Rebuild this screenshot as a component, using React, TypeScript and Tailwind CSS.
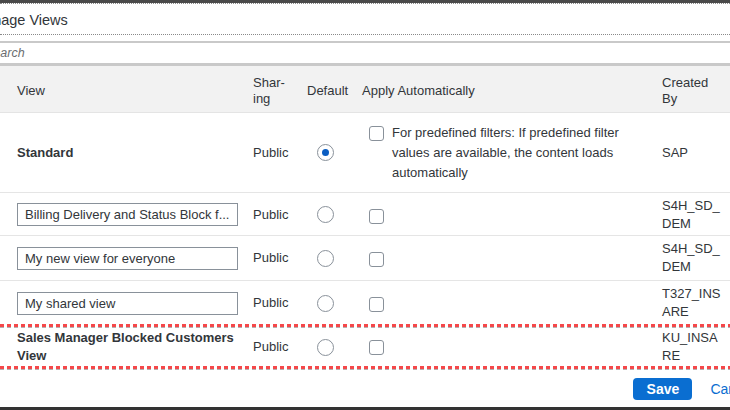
import React from 'react';

type ViewRow = {
  name: string;
  editable: boolean;
  isDefault: boolean;
  createdBy: string;
  height: string;
  note?: string;
};

const rows: ViewRow[] = [
  {
    name: 'Standard',
    editable: false,
    isDefault: true,
    createdBy: 'SAP',
    height: 'h-[80px] border-b border-[#e5e5e5]',
    note: 'For predefined filters: If predefined filter values are available, the content loads automatically',
  },
  { name: 'Billing Delivery and Status Block f...', editable: true, isDefault: false, createdBy: 'S4H_SD_DEM', height: 'h-[43px] border-b border-[#e5e5e5] pt-[1px]' },
  { name: 'My new view for everyone', editable: true, isDefault: false, createdBy: 'S4H_SD_DEM', height: 'h-[45px] border-b border-[#e5e5e5]' },
  { name: 'My shared view', editable: true, isDefault: false, createdBy: 'T327_INSARE', height: 'h-[43px] pt-[1px]' },
];

const cols = 'grid grid-cols-[253px_54px_55px_300px_62px]';

function Radio({ checked }: { checked: boolean }) {
  return (
    <div className="ml-[10px] flex h-[17px] w-[17px] items-center justify-center rounded-full border border-[#89919a] bg-white">
      {checked && <div className="h-[7px] w-[7px] rounded-full bg-[#0a5dc2]" />}
    </div>
  );
}

function Checkbox() {
  return <div className="h-[15px] w-[15px] shrink-0 rounded-[3px] border border-[#89919a] bg-white" />;
}

function RedMark() {
  return (
    <div className="h-[3px] w-full shrink-0 bg-[repeating-linear-gradient(90deg,#f5484a_0_4px,transparent_4px_7px)] drop-shadow-[0_1px_0_rgba(0,0,0,0.3)]" />
  );
}

function Row({ row }: { row: ViewRow }) {
  return (
    <div className={`${cols} ${row.height} shrink-0 items-center`}>
      <div className="pl-[17px]">
        {row.editable ? (
          <input
            readOnly
            defaultValue={row.name}
            className="block h-[23px] w-[221px] border border-[#89919a] bg-white px-[7px] text-[13px] text-[#32363a] outline-none"
          />
        ) : (
          <span className="font-bold">{row.name}</span>
        )}
      </div>
      <div>Public</div>
      <div>
        <Radio checked={row.isDefault} />
      </div>
      <div className="flex items-start gap-[8px] pl-[7px]">
        <div className="pt-[3px]">
          <Checkbox />
        </div>
        {row.note && <p className="w-[250px] leading-[20px]">{row.note}</p>}
      </div>
      <div className="break-all leading-[18px]">{row.createdBy}</div>
    </div>
  );
}

export default function App() {
  return (
    <div className="flex h-[410px] w-[730px] flex-col overflow-hidden bg-white font-['Liberation_Sans',Arial,sans-serif] text-[13px] text-[#32363a]">
      <div className="h-[3px] shrink-0 bg-[#4a4a4a]" />
      <div className="flex h-[32px] shrink-0 items-center border-y border-dotted border-[#8a8a8a] pt-[3px]">
        <span className="-ml-[27px] whitespace-nowrap text-[14.5px]">Manage Views</span>
      </div>
      <div className="h-[6px] shrink-0" />
      <div className="flex h-[25px] shrink-0 items-center border-t-2 border-b-[3px] border-[#c9c9c9]">
        <span className="-ml-[15px] text-[12.5px] italic text-[#6a6d70]">Search</span>
      </div>

      <div className={`${cols} h-[47px] shrink-0 items-center border-b border-[#e4e4e4] bg-[#f2f2f2] pt-[3px] leading-[16px]`}>
        <div className="pl-[17px]">View</div>
        <div className="w-[40px]">Shar&shy;ing</div>
        <div>Default</div>
        <div>Apply Automatically</div>
        <div>Created By</div>
      </div>

      {rows.map((r) => (
        <Row key={r.name} row={r} />
      ))}

      <RedMark />
      <div className={`${cols} h-[39px] shrink-0 items-center pt-[1px]`}>
        <div className="pl-[17px] pr-[10px] font-bold leading-[18px]">Sales Manager Blocked Customers View</div>
        <div>Public</div>
        <div>
          <Radio checked={false} />
        </div>
        <div className="pl-[7px]">
          <Checkbox />
        </div>
        <div className="break-all leading-[18px]">KU_INSARE</div>
      </div>
      <RedMark />

      <div className="flex flex-1 items-center justify-end pt-[2px]">
        <div className="-mr-[32px] flex items-center gap-[10px]">
          <button className="h-[22px] w-[59px] rounded-[4px] bg-[#0a6ed1] text-[14px] font-bold text-white">Save</button>
          <button className="h-[22px] px-[8px] text-[14px] text-[#0a6ed1]">Cancel</button>
        </div>
      </div>
      <div className="h-[3px] shrink-0 bg-[#333333]" />
    </div>
  );
}
